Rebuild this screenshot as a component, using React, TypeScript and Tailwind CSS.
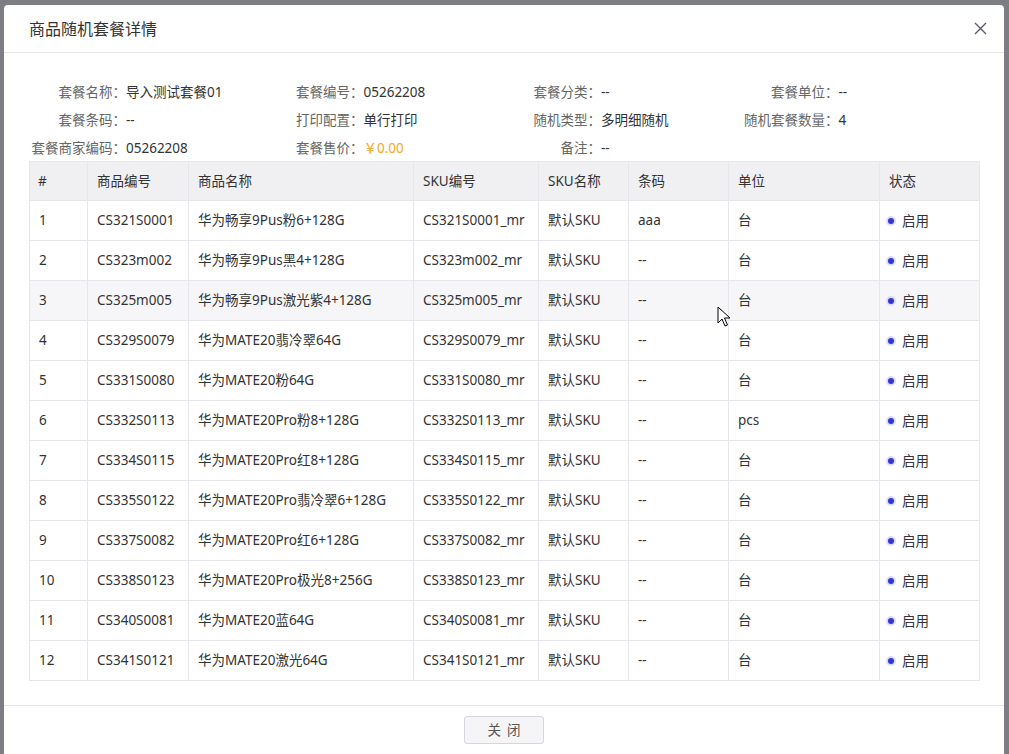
import React from "react";

interface Item {
  code: string;
  name: string;
  sku: string;
  barcode: string;
  unit: string;
}

const items: Item[] = [
  { code: "CS321S0001", name: "华为畅享9Pus粉6+128G", sku: "CS321S0001_mr", barcode: "aaa", unit: "台" },
  { code: "CS323m002", name: "华为畅享9Pus黑4+128G", sku: "CS323m002_mr", barcode: "--", unit: "台" },
  { code: "CS325m005", name: "华为畅享9Pus激光紫4+128G", sku: "CS325m005_mr", barcode: "--", unit: "台" },
  { code: "CS329S0079", name: "华为MATE20翡冷翠64G", sku: "CS329S0079_mr", barcode: "--", unit: "台" },
  { code: "CS331S0080", name: "华为MATE20粉64G", sku: "CS331S0080_mr", barcode: "--", unit: "台" },
  { code: "CS332S0113", name: "华为MATE20Pro粉8+128G", sku: "CS332S0113_mr", barcode: "--", unit: "pcs" },
  { code: "CS334S0115", name: "华为MATE20Pro红8+128G", sku: "CS334S0115_mr", barcode: "--", unit: "台" },
  { code: "CS335S0122", name: "华为MATE20Pro翡冷翠6+128G", sku: "CS335S0122_mr", barcode: "--", unit: "台" },
  { code: "CS337S0082", name: "华为MATE20Pro红6+128G", sku: "CS337S0082_mr", barcode: "--", unit: "台" },
  { code: "CS338S0123", name: "华为MATE20Pro极光8+256G", sku: "CS338S0123_mr", barcode: "--", unit: "台" },
  { code: "CS340S0081", name: "华为MATE20蓝64G", sku: "CS340S0081_mr", barcode: "--", unit: "台" },
  { code: "CS341S0121", name: "华为MATE20激光64G", sku: "CS341S0121_mr", barcode: "--", unit: "台" },
];

const info: { label: string; value: string; price?: boolean }[] = [
  { label: "套餐名称：", value: "导入测试套餐01" },
  { label: "套餐编号：", value: "05262208" },
  { label: "套餐分类：", value: "--" },
  { label: "套餐单位：", value: "--" },
  { label: "套餐条码：", value: "--" },
  { label: "打印配置：", value: "单行打印" },
  { label: "随机类型：", value: "多明细随机" },
  { label: "随机套餐数量：", value: "4" },
  { label: "套餐商家编码：", value: "05262208" },
  { label: "套餐售价：", value: "￥0.00", price: true },
  { label: "备注：", value: "--" },
];

const headers = ["#", "商品编号", "商品名称", "SKU编号", "SKU名称", "条码", "单位", "状态"];
const colWidths = ["w-[58px]", "w-[101px]", "w-[225px]", "w-[125px]", "w-[90px]", "w-[100px]", "w-[151px]", "w-[100px]"];

export default function App() {
  return (
    <div
      className="w-[1009px] h-[754px] overflow-hidden bg-[#7d7d84] pt-[5px] pl-[4px] text-[13.5px] text-[#333]"
      style={{ fontFamily: '"Noto Sans", "Noto Sans CJK SC", sans-serif' }}
    >
      <div className="w-[1000px] h-[760px] bg-white rounded-[4px] flex flex-col">
        {/* header */}
        <div className="h-[48px] border-b border-[#e8e8ec] flex items-center justify-between pl-[25px] pr-[17px]">
          <span className="text-[16px] text-[#333]">商品随机套餐详情</span>
          <svg width="13" height="13" viewBox="0 0 13 13" className="text-[#5a5a6e]">
            <path d="M1 1 L12 12 M12 1 L1 12" stroke="currentColor" strokeWidth="1.4" />
          </svg>
        </div>

        {/* body */}
        <div className="px-[25px] pt-[25px]">
          <div className="grid grid-cols-4 w-[950px]">
            {info.map((f) => (
              <div key={f.label} className="flex h-[28px] items-center">
                <span className="w-[97px] text-right text-[#666] whitespace-nowrap">{f.label}</span>
                <span className={f.price ? "text-[#f5a623]" : "text-[#333]"}>{f.value}</span>
              </div>
            ))}
          </div>

          <table className="-mt-[1px] w-[951px] border-collapse table-fixed">
            <thead>
              <tr className="bg-[#f0f0f3] h-[39px]">
                {headers.map((h, i) => (
                  <th
                    key={h}
                    className={`${colWidths[i]} border border-[#e6e6ec] text-left font-normal ${i === 0 ? "pl-[8px]" : "pl-[9px]"}`}
                  >
                    {h}
                  </th>
                ))}
              </tr>
            </thead>
            <tbody>
              {items.map((it, idx) => (
                <tr key={it.code} className={`h-[40px] ${idx === 2 ? "bg-[#f6f6f8]" : "bg-white"}`}>
                  <td className="border border-[#e6e6ec] pl-[9px]">{idx + 1}</td>
                  <td className="border border-[#e6e6ec] pl-[9px]">{it.code}</td>
                  <td className="border border-[#e6e6ec] pl-[9px] whitespace-nowrap">{it.name}</td>
                  <td className="border border-[#e6e6ec] pl-[9px] whitespace-nowrap">{it.sku}</td>
                  <td className="border border-[#e6e6ec] pl-[9px]">默认SKU</td>
                  <td className="border border-[#e6e6ec] pl-[9px]">{it.barcode}</td>
                  <td className="border border-[#e6e6ec] pl-[9px]">{it.unit}</td>
                  <td className="border border-[#e6e6ec] pl-[6px]">
                    <span className="inline-flex items-center gap-[6px]">
                      <span className="w-[10px] h-[10px] rounded-full bg-[#dcdcf6] flex items-center justify-center">
                        <span className="w-[6px] h-[6px] rounded-full bg-[#3535d0]" />
                      </span>
                      启用
                    </span>
                  </td>
                </tr>
              ))}
            </tbody>
          </table>
        </div>

        {/* footer */}
        <div className="mt-[24px] border-t border-[#e8e8ec] pt-[10px] flex justify-center">
          <button className="w-[80px] h-[28px] rounded-[3px] border border-[#d6d6de] bg-[#f5f5f8] text-[#555] text-[13.5px] tracking-[6px] pl-[6px]">
            关闭
          </button>
        </div>
      </div>

      {/* mouse cursor */}
      <svg width="14" height="22" viewBox="0 0 14 22" className="absolute left-[717px] top-[306px]">
        <path d="M1 1 L1 17 L5 13 L8 20 L10.5 19 L7.5 12 L13 12 Z" fill="white" stroke="black" strokeWidth="1" />
      </svg>
    </div>
  );
}
